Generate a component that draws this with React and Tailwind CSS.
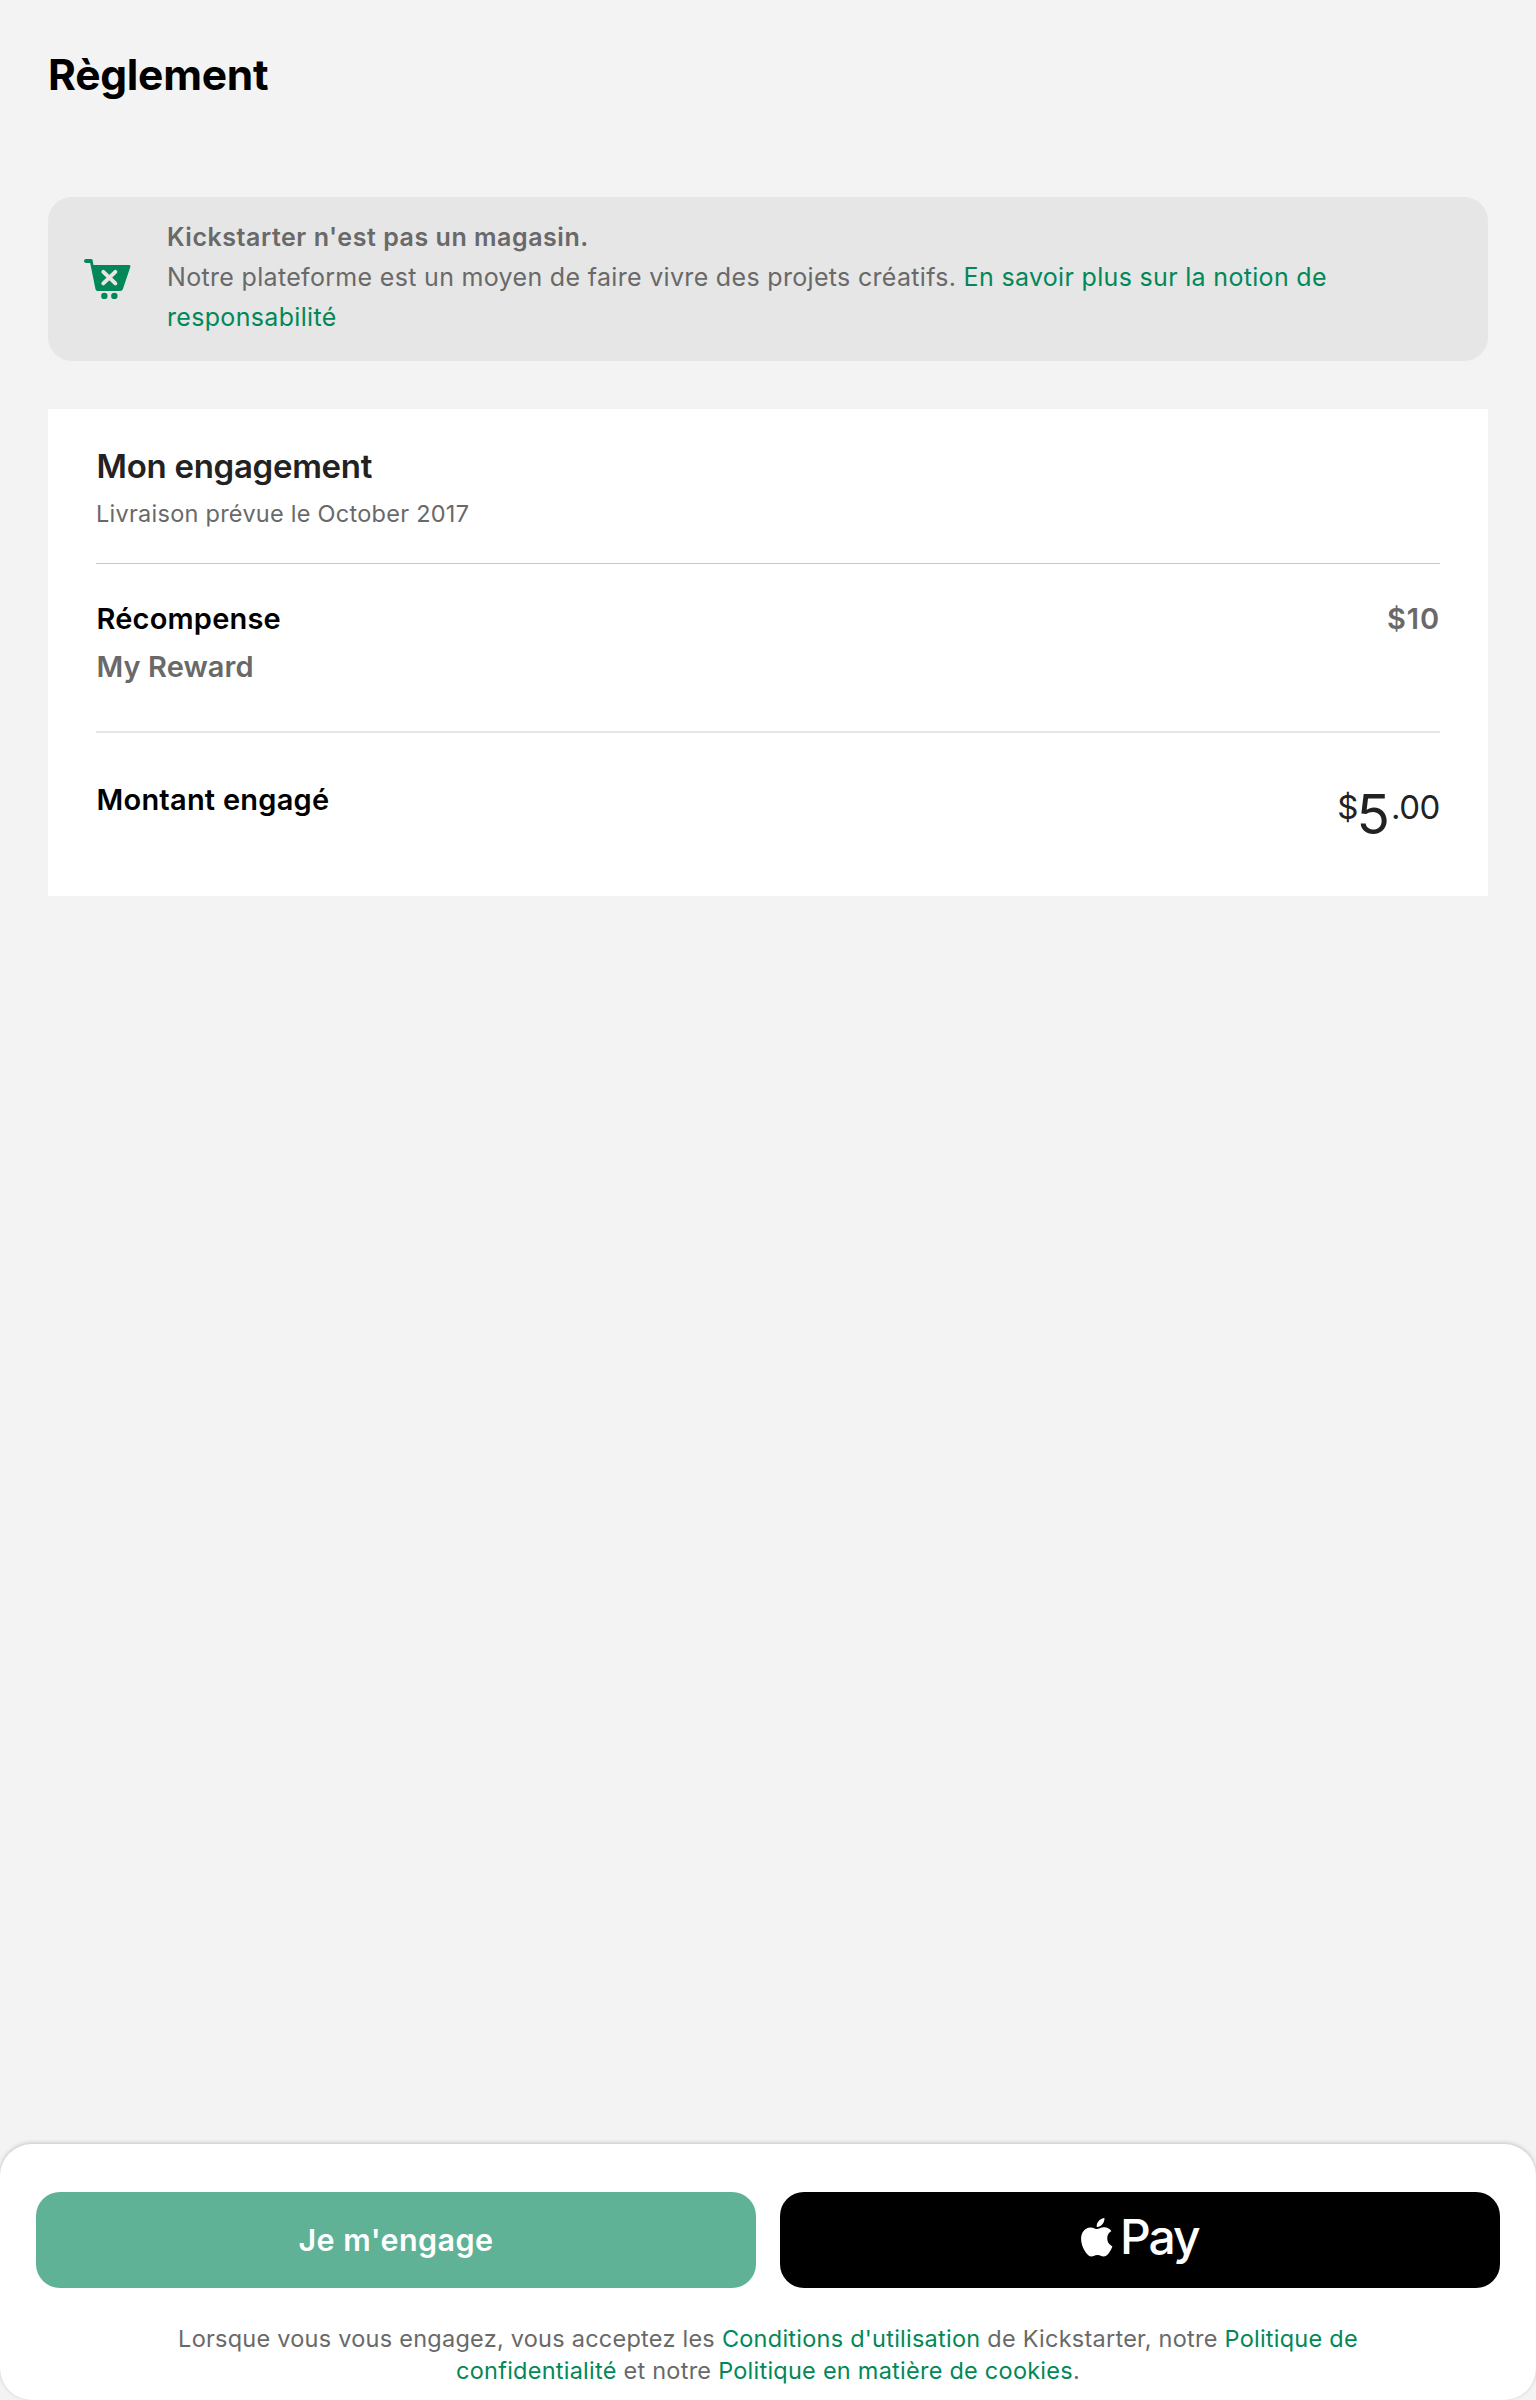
import React from 'react';

function CartIcon() {
  return (
    <svg className="h-10 w-[47px] shrink-0" viewBox="72 87 141 120" aria-hidden="true">
      <path
        fill="#028858"
        d="M78 87H93Q97 87 97.8 91L100.5 105H207Q213 105 211 111L188.500 178Q186.500 183 181 183H112Q107.500 183 106.500 178L90.500 99H78A6 6 0 0 1 78 87Z"
      />
      <path stroke="#e6e6e6" strokeWidth="12" strokeLinecap="round" d="M130 125.500L166 160M166 125.500L130 160" />
      <circle cx="133" cy="198" r="9.700" fill="#028858" />
      <circle cx="163" cy="198" r="9.700" fill="#028858" />
    </svg>
  );
}

function AppleIcon() {
  return (
    <svg className="-mt-[5px] h-[38.5px] w-[31.5px] shrink-0" viewBox="2.2 0 19.6 24" fill="currentColor" aria-hidden="true">
      <path d="M12.152 6.896c-.948 0-2.415-1.078-3.96-1.04-2.04.027-3.91 1.183-4.961 3.014-2.117 3.675-.546 9.103 1.519 12.09 1.013 1.454 2.208 3.09 3.792 3.039 1.52-.065 2.09-.987 3.935-.987 1.831 0 2.35.987 3.96.948 1.637-.026 2.676-1.48 3.676-2.948 1.156-1.688 1.636-3.325 1.662-3.415-.039-.013-3.182-1.221-3.22-4.857-.026-3.04 2.48-4.494 2.597-4.559-1.429-2.09-3.623-2.324-4.39-2.376-2-.156-3.675 1.09-4.61 1.09zM15.53 3.83c.843-1.012 1.4-2.427 1.245-3.83-1.207.052-2.662.805-3.532 1.818-.78.896-1.454 2.338-1.273 3.714 1.338.104 2.715-.688 3.559-1.701" />
    </svg>
  );
}

function Link({ children }) {
  return <a className="text-[#028858]">{children}</a>;
}

function Notice() {
  return (
    <section className="mt-[122px] flex h-[164px] rounded-3xl bg-[#e6e6e6] pt-5 pl-9">
      <div className="mt-[42px]">
        <CartIcon />
      </div>
      <div className="ml-9 text-[25px] leading-10 tracking-[0.32px] text-[#696969]">
        <p className="font-semibold tracking-[0.54px]">Kickstarter n'est pas un magasin.</p>
        <p>
          Notre plateforme est un moyen de faire vivre des projets créatifs.{' '}
          <Link>
            En savoir plus sur la notion de
            <br />
            responsabilité
          </Link>
        </p>
      </div>
    </section>
  );
}

function Pledge() {
  return (
    <section className="mt-12 h-[487px] bg-white px-12 pt-9">
      <h2 className="pl-[0.5px] text-[33px] leading-[42px] font-semibold tracking-[-0.28px] text-[#222222]">Mon engagement</h2>
      <p className="mt-[11px] text-[23.5px] leading-8 tracking-[0.26px] text-[#696969]">Livraison prévue le October 2017</p>
      <div className="mt-[33px] h-px bg-[#c6c6c8]" />
      <div className="mt-9 flex justify-between text-[29px] leading-[37px] font-semibold">
        <div className="pl-[0.5px]">
          <p className="tracking-[0.2px] text-black">Récompense</p>
          <p className="mt-[11px] tracking-[0.07px] text-[#696969]">My Reward</p>
        </div>
        <p className="tracking-[0.9px] text-[#696969]">$10</p>
      </div>
      <div className="mt-[46px] h-0.5 bg-[#e6e6e6]" />
      <div className="flex justify-between">
        <p className="mt-12 pl-[0.5px] text-[29px] leading-[37px] font-semibold tracking-[0.24px] text-black">Montant engagé</p>
        <p className="mt-[45px] flex text-[33px] leading-[58px] text-[#222222]">
          <span>$</span>
          <span className="mt-[7px] -ml-0.5 mr-px text-[55px]">5</span>
          <span className="tracking-[-0.4px]">.00</span>
        </p>
      </div>
    </section>
  );
}

function Footer() {
  return (
    <footer className="mt-auto h-64 rounded-[32px] bg-white px-9 pt-12 shadow-[0_-1px_4px_rgba(0,0,0,0.2)]">
      <div className="grid grid-cols-2 gap-6">
        <button className="flex h-24 items-center justify-center rounded-3xl bg-[#5fb295] text-[30.5px] font-semibold tracking-[0.45px] text-white">
          Je m'engage
        </button>
        <button className="flex h-24 items-center justify-center rounded-3xl bg-black text-white" aria-label="Apple Pay">
          <AppleIcon />
          <span className="ml-[7px] -mt-[7px] text-[48px] leading-none font-[450] tracking-[-2px]">Pay</span>
        </button>
      </div>
      <p className="mt-[35px] text-center text-[23.5px] leading-8 tracking-[0.245px] text-[#696969]">
        Lorsque vous vous engagez, vous acceptez les <Link>Conditions d'utilisation</Link> de Kickstarter, notre{' '}
        <Link>
          Politique de
          <br />
          confidentialité
        </Link>{' '}
        et notre <Link>Politique en matière de cookies</Link>.
      </p>
    </footer>
  );
}

export default function App() {
  return (
    <div className="flex h-[2400px] w-[1536px] flex-col bg-[#f3f3f3] font-['Inter',sans-serif]">
      <main className="px-12 pt-[49px]">
        <h1 className="h-[26px] text-[42.5px] leading-[52px] font-bold tracking-[-0.25px] text-black">Règlement</h1>
        <Notice />
        <Pledge />
      </main>
      <Footer />
    </div>
  );
}
